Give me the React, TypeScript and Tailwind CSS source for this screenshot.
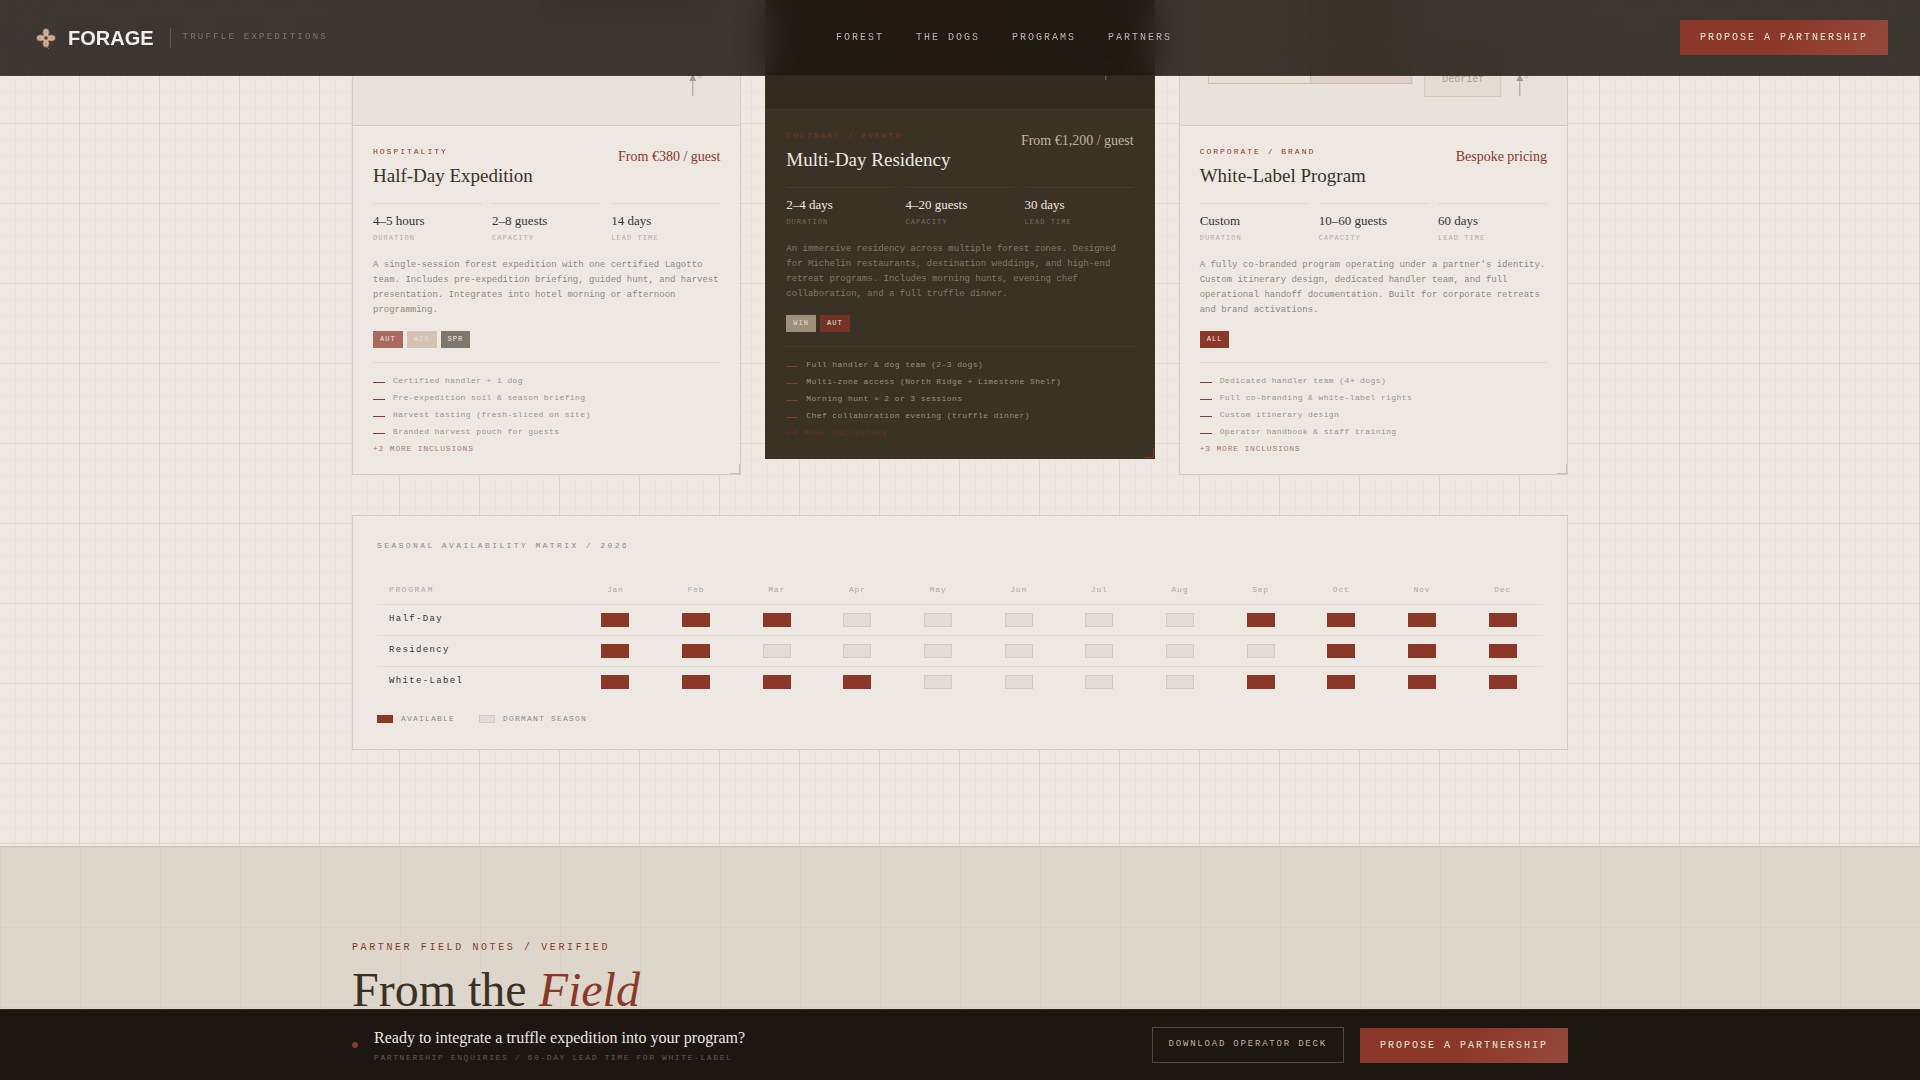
import React from 'react';
import clsx from 'clsx';

type Tag = { label: string; tone: string };

type Program = {
  category: string;
  title: string;
  price: string;
  stats: { value: string; label: string }[];
  description: string;
  tags: Tag[];
  inclusions: string[];
  more: string;
  dark?: boolean;
  plan: 'trail' | 'residency' | 'campus';
};

const programs: Program[] = [
  {
    category: 'Hospitality',
    title: 'Half-Day Expedition',
    price: 'From €380 / guest',
    stats: [
      { value: '4–5 hours', label: 'Duration' },
      { value: '2–8 guests', label: 'Capacity' },
      { value: '14 days', label: 'Lead time' },
    ],
    description:
      'A single-session forest expedition with one certified Lagotto team. Includes pre-expedition briefing, guided hunt, and harvest presentation. Integrates into hotel morning or afternoon programming.',
    tags: [
      { label: 'Aut', tone: 'bg-[#ab6a5f] text-[#ede8e1]' },
      { label: 'Win', tone: 'bg-[#d3c4b2] text-[#e6dccf]' },
      { label: 'Spr', tone: 'bg-[#7f776b] text-[#ede8e1]' },
    ],
    inclusions: [
      'Certified handler + 1 dog',
      'Pre-expedition soil & season briefing',
      'Harvest tasting (fresh-sliced on site)',
      'Branded harvest pouch for guests',
    ],
    more: '+2 more inclusions',
    plan: 'trail',
  },
  {
    category: 'Culinary / Events',
    title: 'Multi-Day Residency',
    price: 'From €1,200 / guest',
    stats: [
      { value: '2–4 days', label: 'Duration' },
      { value: '4–20 guests', label: 'Capacity' },
      { value: '30 days', label: 'Lead time' },
    ],
    description:
      'An immersive residency across multiple forest zones. Designed for Michelin restaurants, destination weddings, and high-end retreat programs. Includes morning hunts, evening chef collaboration, and a full truffle dinner.',
    tags: [
      { label: 'Win', tone: 'bg-[#9d8f7a] text-[#e6dccf]' },
      { label: 'Aut', tone: 'bg-[#733427] text-[#ede8e1]' },
    ],
    inclusions: [
      'Full handler & dog team (2–3 dogs)',
      'Multi-zone access (North Ridge + Limestone Shelf)',
      'Morning hunt × 2 or 3 sessions',
      'Chef collaboration evening (truffle dinner)',
    ],
    more: '+4 more inclusions',
    dark: true,
    plan: 'residency',
  },
  {
    category: 'Corporate / Brand',
    title: 'White-Label Program',
    price: 'Bespoke pricing',
    stats: [
      { value: 'Custom', label: 'Duration' },
      { value: '10–60 guests', label: 'Capacity' },
      { value: '60 days', label: 'Lead time' },
    ],
    description:
      "A fully co-branded program operating under a partner's identity. Custom itinerary design, dedicated handler team, and full operational handoff documentation. Built for corporate retreats and brand activations.",
    tags: [{ label: 'All', tone: 'bg-[#8b3829] text-[#ede8e1]' }],
    inclusions: [
      'Dedicated handler team (4+ dogs)',
      'Full co-branding & white-label rights',
      'Custom itinerary design',
      'Operator handbook & staff training',
    ],
    more: '+3 more inclusions',
    plan: 'campus',
  },
];

const months = ['Jan', 'Feb', 'Mar', 'Apr', 'May', 'Jun', 'Jul', 'Aug', 'Sep', 'Oct', 'Nov', 'Dec'];

const matrix = [
  { name: 'Half-Day', open: ['Jan', 'Feb', 'Mar', 'Sep', 'Oct', 'Nov', 'Dec'] },
  { name: 'Residency', open: ['Jan', 'Feb', 'Oct', 'Nov', 'Dec'] },
  { name: 'White-Label', open: ['Jan', 'Feb', 'Mar', 'Apr', 'Sep', 'Oct', 'Nov', 'Dec'] },
];

const mono = "font-['Liberation_Mono',monospace]";
const serif = "font-['Liberation_Serif',serif]";

function Logo() {
  return (
    <svg viewBox="0 0 28 28" className="size-7" aria-hidden="true">
      <g fill="#c9b49c" stroke="#84503d" strokeWidth="0.8">
        <ellipse cx="14" cy="8.6" rx="3.2" ry="4" />
        <ellipse cx="14" cy="19.4" rx="3.2" ry="4" />
        <ellipse cx="8.6" cy="14" rx="4" ry="3.2" />
        <ellipse cx="19.4" cy="14" rx="4" ry="3.2" />
      </g>
      <circle cx="14" cy="14" r="3.6" fill="#c9b49c" />
      <circle cx="14" cy="14" r="1.8" fill="#5e3325" />
      <g fill="#a4836a">
        <circle cx="14" cy="8" r="0.8" />
        <circle cx="14" cy="20" r="0.8" />
        <circle cx="8" cy="14" r="0.8" />
        <circle cx="20" cy="14" r="0.8" />
      </g>
      <path d="M15 22.5l1.6 2.4" stroke="#8a7f70" strokeWidth="1" />
    </svg>
  );
}

function PlanDrawing({ plan, dark }: { plan: Program['plan']; dark?: boolean }) {
  const line = dark ? '#7d7465' : '#a09a92';
  return (
    <svg viewBox="0 0 387 125" preserveAspectRatio="xMidYMax slice" className="block h-[125px] w-full" aria-hidden="true">
      {plan === 'trail' && <rect x="188" y="-10" width="170" height="24" fill="#8b3829" fillOpacity="0.13" />}
      {plan === 'residency' && <rect x="106" y="-10" width="136" height="86" fill="#8b3829" fillOpacity="0.25" />}
      {plan === 'campus' && (
        <>
          <rect x="28.5" y="-10.5" width="102" height="94" fill="#e6e0d5" stroke="#c9c3b9" />
          <rect x="130.5" y="-10.5" width="101" height="94" fill="#dfd1ca" stroke="#c9bdb4" />
          <rect x="244.5" y="50.5" width="76" height="46" fill="#e1ddd0" stroke="#cdc8bb" />
          <text
            x="283"
            y="82"
            textAnchor="middle"
            fill="#a8a297"
            className="font-['Liberation_Mono',monospace] text-[10px]"
          >
            Debrief
          </text>
        </>
      )}
      <path d="M339.5 96V80" stroke={line} />
      <path d="M339.5 74l3.5 7h-7z" fill={line} />
      <text x="344" y="79" fill={line} fillOpacity="0.5" className="font-['Liberation_Mono',monospace] text-[7px]">
        N
      </text>
    </svg>
  );
}

function ProgramCard({ program }: { program: Program }) {
  const { dark } = program;
  const rule = dark ? 'border-[#463c31]' : 'border-[#dfdad3]';
  return (
    <article
      className={clsx(
        'relative border border-t-0',
        dark ? '-translate-y-4 border-[#3b3226] bg-[#3b3226]' : 'border-[#d2cdc6] bg-[#ede8e1]'
      )}
    >
      <div className={clsx('border-b', dark ? 'border-[#41372b] bg-[#332a20]' : 'border-[#d2cdc6] bg-[#e7e2dc]')}>
        <PlanDrawing plan={program.plan} dark={dark} />
      </div>

      <div className="p-5">
        <div className="flex items-start justify-between">
          <div>
            <p
              className={clsx(
                mono,
                'text-[8px] leading-3 tracking-[0.25em] uppercase',
                dark ? 'text-[#7d3324]' : 'text-[#8b3829]'
              )}
            >
              {program.category}
            </p>
            <h3 className={clsx(serif, 'mt-1.5 text-[19px] leading-[23px]', dark ? 'text-[#ede8e1]' : 'text-[#3b3226]')}>
              {program.title}
            </h3>
          </div>
          <p className={clsx(serif, 'text-[14px] leading-[22px]', dark ? 'text-[#c4b49c]' : 'text-[#8b3829]')}>
            {program.price}
          </p>
        </div>

        <dl className="mt-4 grid grid-cols-3 gap-2.5">
          {program.stats.map((stat) => (
            <div key={stat.label} className={clsx('flex flex-col-reverse border-t pt-[9px]', rule)}>
              <dt
                className={clsx(
                  mono,
                  'mt-[5px] text-[7px] leading-[10px] tracking-[0.15em] uppercase',
                  dark ? 'text-[#746a5c]' : 'text-[#b3ada4]'
                )}
              >
                {stat.label}
              </dt>
              <dd className={clsx(serif, 'text-[13px] leading-[15px]', dark ? 'text-[#ede8e1]' : 'text-[#3b3226]')}>
                {stat.value}
              </dd>
            </div>
          ))}
        </dl>

        <p className={clsx(mono, 'mt-[15px] text-[9px] leading-[15px]', dark ? 'text-[#81776a]' : 'text-[#918a80]')}>
          {program.description}
        </p>

        <div className="mt-[13px] flex gap-1">
          {program.tags.map((tag) => (
            <span
              key={tag.label}
              className={clsx(mono, 'px-[7px] py-1 text-[7px] leading-[9px] tracking-[0.15em] uppercase', tag.tone)}
            >
              {tag.label}
            </span>
          ))}
        </div>

        <ul className={clsx('mt-3.5 flex flex-col gap-[5px] border-t pt-3', rule)}>
          {program.inclusions.map((item) => (
            <li
              key={item}
              className={clsx(
                mono,
                'flex items-start gap-2 text-[8px] leading-3 tracking-[0.05em]',
                dark ? 'text-[#9a8e7c]' : 'text-[#9c958b]'
              )}
            >
              <span className="mt-[7px] h-px w-3 bg-[#8b3829]" />
              {item}
            </li>
          ))}
          <li
            className={clsx(
              mono,
              'text-[8px] leading-[11px] tracking-[0.1em] uppercase',
              dark ? 'text-[#6b3023]' : 'text-[#b07a6f]'
            )}
          >
            {program.more}
          </li>
        </ul>
      </div>

      <span
        className={clsx(
          'absolute right-0 bottom-0 size-2.5 border-r border-b',
          dark ? 'border-[#8b3829]' : 'border-[#c6c0b8]'
        )}
      />
    </article>
  );
}

function Slot({ open, className }: { open: boolean; className: string }) {
  return (
    <span
      className={clsx(
        'block border',
        open ? 'border-[#8b3829] bg-[#8b3829]' : 'border-[#d0cbc4] bg-[#e1dcd6]',
        className
      )}
    />
  );
}

function SeasonMatrix() {
  return (
    <div className="mt-10 border border-[#d2cdc6] bg-[#ede8e1] p-6">
      <h3 className={clsx(mono, 'text-[8px] leading-3 tracking-[0.3em] text-[#918a80] uppercase')}>
        Seasonal availability matrix / 2026
      </h3>
      <table className={clsx(mono, 'mt-6 w-full table-fixed border-collapse')}>
        <thead>
          <tr className="border-b border-[#e0dbd3] text-[8px] leading-3 text-[#b0aaa1]">
            <th scope="col" className="w-[198px] px-3 py-2 text-left font-normal tracking-[0.2em]">
              PROGRAM
            </th>
            {months.map((month) => (
              <th key={month} scope="col" className="py-2 text-center font-normal tracking-[0.1em]">
                {month}
              </th>
            ))}
          </tr>
        </thead>
        <tbody>
          {matrix.map((row) => (
            <tr key={row.name} className="border-b border-[#e0dbd3] last:border-b-0">
              <th
                scope="row"
                className="px-3 pt-2 text-left align-top text-[9px] leading-3 font-normal tracking-[0.15em] text-[#3b3226]"
              >
                {row.name}
              </th>
              {months.map((month) => (
                <td key={month} className="py-2">
                  <Slot open={row.open.includes(month)} className="mx-auto h-3.5 w-7" />
                </td>
              ))}
            </tr>
          ))}
        </tbody>
      </table>
      <div className={clsx(mono, 'mt-4 flex gap-6 text-[8px] leading-3 tracking-[0.15em] text-[#918a80] uppercase')}>
        <span className="flex items-center gap-2">
          <Slot open className="h-2 w-4" />
          Available
        </span>
        <span className="flex items-center gap-2">
          <Slot open={false} className="h-2 w-4" />
          Dormant season
        </span>
      </div>
    </div>
  );
}

function ProposeButton() {
  return (
    <button
      type="button"
      className={clsx(
        mono,
        'bg-linear-135 from-[#8b3829] from-50% to-[#964a3b] px-5 py-3 text-[10px] leading-[11px] tracking-[0.2em] whitespace-nowrap text-[#f3e9e0] uppercase'
      )}
    >
      Propose a partnership
    </button>
  );
}

function Header() {
  return (
    <header className="fixed inset-x-0 top-0 z-20 flex items-center justify-between border-b border-[#c4b49c]/5 bg-[#1c1710]/85 px-8 py-5 backdrop-blur-lg">
      <a href="#top" className="flex items-center">
        <Logo />
        <span className="ml-2 font-['Liberation_Sans',sans-serif] text-[20px] leading-5 font-bold text-[#f3eee7]">
          FORAGE
        </span>
        <span
          className={clsx(
            mono,
            'ml-4 border-l border-[#5f574c] pt-[3px] pb-[5px] pl-3 text-[9px] leading-3 tracking-[0.25em] text-[#7e7566] uppercase'
          )}
        >
          Truffle expeditions
        </span>
      </a>
      <nav className={clsx(mono, 'flex gap-8 text-[10px] leading-3 tracking-[0.2em] text-[#c4b49c] uppercase')}>
        <a href="#forest">Forest</a>
        <a href="#dogs">The dogs</a>
        <a href="#programs">Programs</a>
        <a href="#partners">Partners</a>
      </nav>
      <ProposeButton />
    </header>
  );
}

function BottomBar() {
  return (
    <aside className="fixed inset-x-0 bottom-0 z-20 border-t border-[#2f2820] bg-[#1c1710]">
      <div className="mx-auto flex max-w-7xl items-center justify-between px-8 py-4">
        <div className="flex items-center gap-4">
          <span className="size-1.5 rounded-full bg-[#8b3829]" />
          <div className="pt-0.5">
            <p className={clsx(serif, 'text-[16px] leading-5 text-[#ede8e1]')}>
              Ready to integrate a truffle expedition into your program?
            </p>
            <p className={clsx(mono, 'mt-1 text-[8px] leading-3 tracking-[0.2em] text-[#625a4e] uppercase')}>
              Partnership enquiries / 60-day lead time for white-label
            </p>
          </div>
        </div>
        <div className="flex items-center gap-4">
          <button
            type="button"
            className={clsx(
              mono,
              'border border-[#4f483d] px-4 pt-[11px] pb-[13px] text-[9px] leading-[10px] tracking-[0.2em] text-[#c4b49c] uppercase'
            )}
          >
            Download operator deck
          </button>
          <ProposeButton />
        </div>
      </div>
    </aside>
  );
}

function App() {
  return (
    <div id="top" className="flex min-h-screen flex-col bg-[#ddd6ca]">
      <Header />

      {/* survey paper: 80px major squares over a 16px minor grid */}
      <section
        id="programs"
        className="bg-[#ede8e1] bg-[linear-gradient(90deg,transparent_79px,#d9d4cc_79px),linear-gradient(transparent_79px,#dcd7cf_79px),linear-gradient(90deg,transparent_15px,#e7e2da_15px),linear-gradient(transparent_15px,#e9e4dc_15px)] bg-[size:80px_80px,80px_80px,16px_16px,16px_16px] bg-[position:0_44px] pb-24"
      >
        <div className="mx-auto max-w-7xl px-8">
          <div className="grid grid-cols-3 gap-6">
            {programs.map((program) => (
              <ProgramCard key={program.title} program={program} />
            ))}
          </div>
          <SeasonMatrix />
        </div>
      </section>

      <section
        id="partners"
        className="grow border-t border-[#c9c4ba] bg-[linear-gradient(90deg,#d7d0c4_1px,transparent_1px),linear-gradient(#d8d1c5_1px,transparent_1px)] bg-[size:80px_80px] pt-24"
      >
        <div className="mx-auto max-w-7xl px-8">
          <p className={clsx(mono, 'text-[10px] leading-[10px] tracking-[0.26em] text-[#8b3829] uppercase')}>
            Partner field notes / Verified
          </p>
          <h2 className={clsx(serif, 'mt-3 text-5xl leading-[50px] text-[#3b3226]')}>
            From the <em className="text-[#8b3829]">Field</em>
          </h2>
        </div>
      </section>

      <BottomBar />
    </div>
  );
}

export default App;
